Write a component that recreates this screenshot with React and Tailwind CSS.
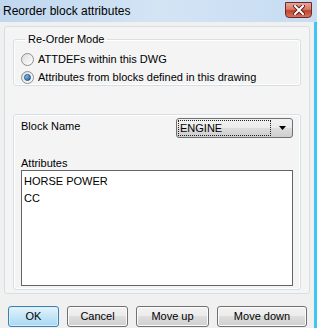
import React from 'react';

const Radio = ({ checked, label }) => (
  <label className="flex items-center h-[18px] gap-[4px]">
    <span className="w-[13px] h-[13px] rounded-full border border-[#8f8f8f] bg-gradient-to-br from-[#dcdcdc] to-[#ffffff] flex items-center justify-center shrink-0">
      {checked && <span className="w-[7px] h-[7px] rounded-full bg-gradient-to-br from-[#8fd6f7] to-[#1a5fa8] border border-[#1d4f84]" />}
    </span>
    <span>{label}</span>
  </label>
);

const Button = ({ children, w, primary }) => (
  <button
    className={`h-[21px] ${w} rounded-[3px] border text-[11px] text-black ${
      primary
        ? 'border-[#3c7fb1] bg-gradient-to-b from-[#e5f4fc] via-[#c4e5f6] to-[#a7d9f5] shadow-[inset_0_0_0_1px_#d8effb]'
        : 'border-[#707070] bg-[linear-gradient(#f2f2f2_0%,#ebebeb_50%,#dddddd_50%,#cfcfcf_100%)] shadow-[inset_0_0_0_1px_#fbfbfb]'
    }`}
  >
    {children}
  </button>
);

export default function App() {
  return (
    <div className="w-[317px] h-[328px] overflow-hidden flex flex-col bg-[#f0f0f0] text-[11px] text-black font-['Segoe_UI','Liberation_Sans',sans-serif]">
      {/* title bar */}
      <div className="h-[22px] shrink-0 flex items-center justify-between bg-gradient-to-r from-[#c0d7ef] via-[#d3e4f5] to-[#c7dcf2] pl-[3px] pr-[5px]">
        <span className="text-[12px] leading-none">Reorder block attributes</span>
        <span className="mb-[3px] w-[27px] h-[16px] rounded-b-[4px] border border-[#6d2a2a] bg-[linear-gradient(#e8a394_0%,#d97a66_45%,#c0432c_55%,#d9735c_100%)] flex items-center justify-center">
          <svg width="12" height="10" viewBox="0 0 12 10">
            <path d="M2 1 L10 9 M10 1 L2 9" stroke="#5a2020" strokeWidth="4" strokeLinecap="square" />
            <path d="M2 1 L10 9 M10 1 L2 9" stroke="#ffffff" strokeWidth="2" strokeLinecap="square" />
          </svg>
        </span>
      </div>

      <div className="flex-1 flex flex-col border-r-[3px] border-r-[#3cc8f2] pt-[4px]">
        {/* main panel */}
        <div className="ml-[4px] w-[306px] h-[268px] border border-[#d5dfe5] rounded-[3px] bg-[#f4f4f4] px-[8px] pt-[5px] flex flex-col gap-[28px]">
          <fieldset className="h-[54px] border border-[#d5dfe5] rounded-[3px] px-[7px] pt-[3px] shadow-[inset_0_0_0_1px_#ffffff]">
            <legend className="ml-[4px] px-[3px] leading-[15px]">Re-Order Mode</legend>
            <Radio label="ATTDEFs within this DWG" />
            <Radio checked label="Attributes from blocks defined in this drawing" />
          </fieldset>

          <div className="h-[176px] border border-[#d5dfe5] rounded-[3px] pl-[7px] pr-[6px] pt-[3px] shadow-[inset_0_0_0_1px_#ffffff] flex flex-col">
            <div className="flex justify-between items-start">
              <span className="leading-[15px] mt-[1px]">Block Name</span>
              <div className="mr-[1px] w-[117px] h-[20px] rounded-[3px] border border-[#707070] bg-[linear-gradient(#f2f2f2_0%,#ebebeb_50%,#dddddd_50%,#cfcfcf_100%)] flex items-center pl-[1px] pr-[5px]">
                <span className="flex-1 h-[16px] border border-dotted border-[#202020] flex items-center pl-[1px] leading-none">ENGINE</span>
                <svg width="8" height="4" viewBox="0 0 8 4" className="ml-[8px]">
                  <path d="M0 0 H7 L3.5 4 Z" fill="#000" />
                </svg>
              </div>
            </div>
            <span className="mt-[18px] leading-[15px]">Attributes</span>
            <div className="mt-[-1px] w-[272px] h-[116px] border border-[#646464] bg-white pl-[2px] pt-[2px] flex flex-col">
              <span className="leading-[17px]">HORSE POWER</span>
              <span className="leading-[17px]">CC</span>
            </div>
          </div>
        </div>

        {/* buttons */}
        <div className="mt-[12px] flex pl-[8px] gap-[8px]">
          <Button w="w-[51px]" primary>OK</Button>
          <Button w="w-[61px]">Cancel</Button>
          <Button w="w-[73px]">Move up</Button>
          <Button w="w-[90px]">Move down</Button>
        </div>
      </div>
    </div>
  );
}
